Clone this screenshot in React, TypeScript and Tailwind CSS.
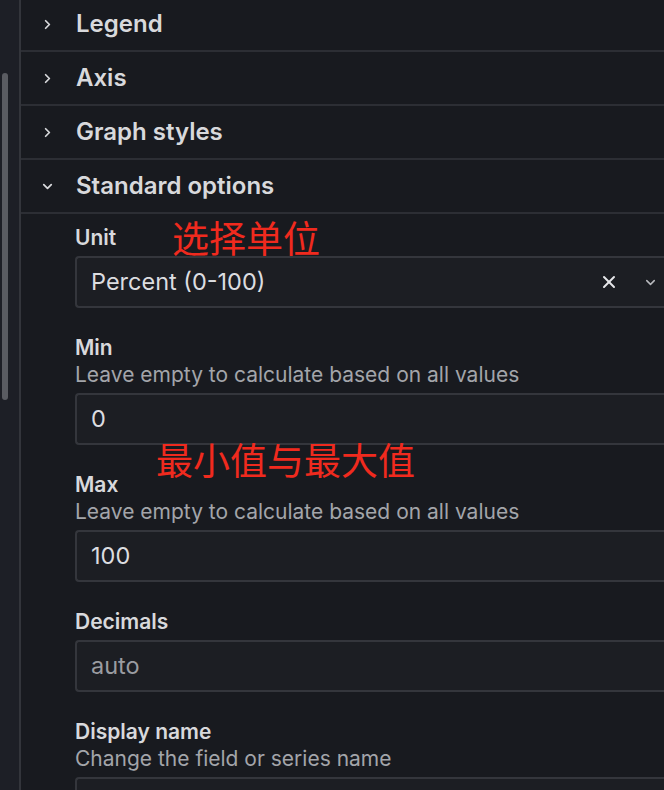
import { ChevronRight, ChevronDown, X } from 'lucide-react'

interface FieldProps {
  label: string
  description?: string
  children: React.ReactNode
}

function SectionHeader({ title, open }: { title: string; open?: boolean }) {
  return (
    <div className="flex h-[54px] items-center border-b-2 border-[#2c2e34] pl-[19px]">
      {open ? (
        <ChevronDown className="h-[15px] w-[15px] text-[#d8d9dc]" strokeWidth={2.8} />
      ) : (
        <ChevronRight className="h-[15px] w-[15px] text-[#d8d9dc]" strokeWidth={2.8} />
      )}
      <span className="ml-[21px] text-[24px] font-semibold text-[#d8d9dc]">{title}</span>
    </div>
  )
}

function Field({ label, description, children }: FieldProps) {
  return (
    <div className="flex flex-col">
      <div className="text-[21px] leading-[24px] font-semibold text-[#d8d9dc]">{label}</div>
      {description && (
        <div className="mt-[3px] text-[21px] leading-[24px] text-[#a3a5aa]">{description}</div>
      )}
      <div className="mt-[6px]">{children}</div>
    </div>
  )
}

function TextBox({ value, placeholder }: { value?: string; placeholder?: boolean }) {
  return (
    <div className="flex h-[52px] items-center rounded-l-[4px] border-2 border-r-0 border-[#34363c] bg-[#1c1e23] pl-[14px]">
      <span className={`text-[23.5px] ${placeholder ? 'text-[#9a9ca1]' : 'text-[#dcdde0]'}`}>{value}</span>
    </div>
  )
}

export default function App() {
  return (
    <div
      className="flex h-[790px] w-[664px] overflow-hidden bg-[#181a1f]"
      style={{ fontFamily: 'Inter, "Noto Sans", "Noto Sans CJK SC", sans-serif' }}
    >
      {/* scroll strip */}
      <div className="flex w-[19px] shrink-0 flex-col bg-[#1d1f26] pl-[2px] pt-[73px]">
        <div className="h-[327px] w-[6px] rounded-full bg-[#5a5c62]" />
      </div>
      <div className="w-[2px] shrink-0 bg-[#33353b]" />

      {/* options pane */}
      <div className="relative flex-1 -mt-[2px]">
        <SectionHeader title="Legend" />
        <SectionHeader title="Axis" />
        <SectionHeader title="Graph styles" />
        <SectionHeader title="Standard options" open />

        <div className="flex flex-col gap-[28px] pl-[54px] pt-[12px]">
          <Field label="Unit">
            <div className="flex h-[52px] items-center rounded-l-[4px] border-2 border-r-0 border-[#34363c] bg-[#1c1e23] pl-[14px]">
              <span className="flex-1 text-[23.5px] text-[#dcdde0]">Percent (0-100)</span>
              <X className="mr-[24px] h-[20px] w-[20px] text-[#e6e7ea]" strokeWidth={2.4} />
              <ChevronDown className="mr-[6px] h-[15px] w-[15px] text-[#b8babe]" strokeWidth={2.4} />
            </div>
          </Field>

          <Field label="Min" description="Leave empty to calculate based on all values">
            <TextBox value="0" />
          </Field>

          <Field label="Max" description="Leave empty to calculate based on all values">
            <TextBox value="100" />
          </Field>

          <Field label="Decimals">
            <TextBox value="auto" placeholder />
          </Field>

          <Field label="Display name" description="Change the field or series name">
            <TextBox value="" />
          </Field>
        </div>

        {/* red annotations */}
        <div className="absolute left-[151px] top-[220px] text-[37px] leading-[44px] text-[#f02a1e]">选择单位</div>
        <div className="absolute left-[135px] top-[442px] text-[37px] leading-[44px] text-[#f02a1e]">最小值与最大值</div>
      </div>
    </div>
  )
}
